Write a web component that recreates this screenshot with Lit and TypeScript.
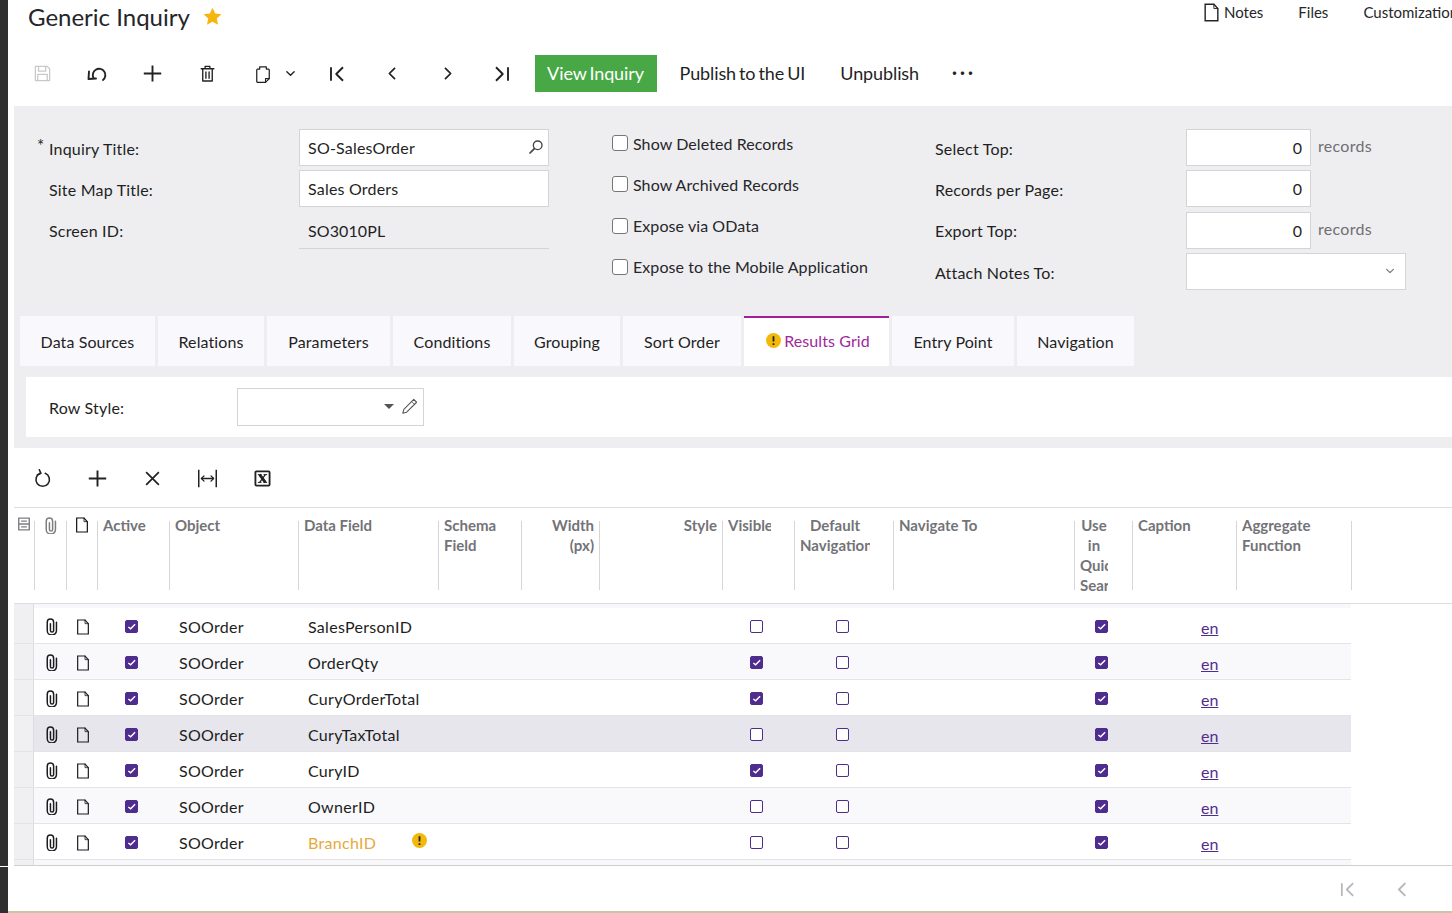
import { LitElement, html, css, svg } from "lit";
import { customElement } from "lit/decorators.js";

const icon = (body: unknown, size = 24, cls = "") =>
  html`<svg class="ic ${cls}" width=${size} height=${size} viewBox="0 0 24 24" fill="none" stroke="currentColor" stroke-width="1.6" stroke-linecap="round" stroke-linejoin="round">${body}</svg>`;

const I = {
  save: svg`<path d="M3 3h15l3 3v15H3z"/><path d="M7 3v6h9V3"/><path d="M6 21v-8h12v8"/>`,
  undo: svg`<path d="M8.500 16A6.300 6.300 0 1 1 18 18" stroke-width="1.900"/><path d="M4 9.500 3.500 17l7.500-.5" stroke-width="1.900"/>`,
  plus: svg`<path d="M12 2v20M1 12h22" stroke-width="2.4" stroke-linecap="butt"/>`,
  trash: svg`<path d="M4 6h16M9 6V3h6v3M6 6v15.500h12V6M10 10v8M14 10v8" stroke-width="1.700"/>`,
  clip: svg`<path d="M8 6V3.500h8V6h2.500l1 1v10.500L15 22H5l-.5-1V7l1-1z" stroke-width="1.500"/><path d="M15 22v-4.500h4.500" stroke-width="1.300"/>`,
  chev: svg`<path d="m4 8 8 8 8-8" stroke-width="3"/>`,
  first: svg`<path d="M4 3v18M20 3l-9 9 9 9" stroke-width="2.500" stroke-linecap="butt"/>`,
  prev: svg`<path d="m16 3-9 9 9 9" stroke-width="2.800" stroke-linecap="butt"/>`,
  next: svg`<path d="m8 3 9 9-9 9" stroke-width="2.800" stroke-linecap="butt"/>`,
  last: svg`<path d="M20 3v18M4 3l9 9-9 9" stroke-width="2.500" stroke-linecap="butt"/>`,
  note: svg`<path d="M4 1.500h11l5 5.500v15.500H4z" stroke-width="1.800" stroke-linejoin="miter"/><path d="M15 1.500V7h5" stroke-width="1.200"/>`,
  search: svg`<circle cx="14.500" cy="9.500" r="6.500" stroke-width="2"/><path d="M9.500 14.500 3 21" stroke-width="2.600"/>`,
  pencil: svg`<path d="M18 2l4 4L8 20l-5.500 1.500L4 16z" stroke-width="1.500"/><path d="M15 5l4 4" stroke-width="1.200"/>`,
  refresh: svg`<path d="M9 5.500A8.500 8.500 0 1 0 15.500 5.500" stroke-width="2"/><path d="M8 1l2 4.500-4.500 2" stroke-width="2"/>`,
  x: svg`<path d="m3 3 18 18M21 3 3 21" stroke-width="2.400" stroke-linecap="butt"/>`,
  fit: svg`<path d="M2 2v20M22 2v20M5 12h14" stroke-width="1.700" stroke-linecap="butt"/><path d="m8 9-3 3 3 3M16 9l3 3-3 3" stroke-width="1.500"/>`,
  excel: svg`<rect x="2" y="2" width="20" height="20" rx="1.500" stroke-width="2.600"/><path d="M8 6.500 16 17.500" stroke-width="4" stroke-linecap="butt"/><path d="M16 6.500 8 17.500" stroke-width="1.800" stroke-linecap="butt"/><path d="M5.500 6.500h5M13.500 6.500h5M5.500 17.500h5M13.500 17.500h5" stroke-width="1.400" stroke-linecap="butt"/>`,
  paper: svg`<path d="M10.500 8v9.500a2.250 2.250 0 0 0 4.500 0V6a4.500 4.500 0 0 0-9 0v11.500a6.500 6.500 0 0 0 13 0V6" stroke-width="2.100"/>`,
  store: svg`<rect x="3" y="2" width="18" height="20" stroke-width="2.400"/><path d="M3 12h18M8 7h8M8 17h8" stroke-width="2.400"/>`,
};

const star = html`<svg class="star" width="19" height="19" viewBox="0 0 24 24"><path fill="#f5b70f" d="m12 1 3.400 7.300 7.900.900-5.900 5.400 1.600 7.900L12 18.500l-7 4 1.600-7.900L.7 9.200l7.900-.900z"/></svg>`;

const warn = () =>
  html`<svg class="warn" width="15" height="15" viewBox="0 0 16 16"><circle cx="8" cy="8" r="8" fill="#f2b90c"/><path d="M8 3.500v5.500M8 11v1.800" stroke="#222" stroke-width="1.900"/></svg>`;

const check = (on: boolean) =>
  html`<span class="cb ${on ? "on" : ""}">${on
    ? html`<svg width="9" height="9" viewBox="0 0 10 10"><path d="m1.500 5.500 2.500 2 5-5" fill="none" stroke="#fff" stroke-width="1.600"/></svg>`
    : ""}</span>`;

const rows = [
  { f: "SalesPersonID", v: false },
  { f: "OrderQty", v: true },
  { f: "CuryOrderTotal", v: true },
  { f: "CuryTaxTotal", v: false, sel: true },
  { f: "CuryID", v: true },
  { f: "OwnerID", v: false },
  { f: "BranchID", v: false, warn: true },
];

const tabs: [string, number][] = [
  ["Data Sources", 135],
  ["Relations", 106],
  ["Parameters", 123],
  ["Conditions", 118],
  ["Grouping", 106],
  ["Sort Order", 118],
  ["Results Grid", 145],
  ["Entry Point", 122],
  ["Navigation", 117],
];

@customElement("app-root")
export class AppRoot extends LitElement {
  static styles = css`
    :host { display: flex; width: 1452px; height: 913px; overflow: hidden; background: #fff; color: #1f1f24; font-family: Lato, "Liberation Sans", sans-serif; font-size: 16px; }
    .ic { display: block; flex: none; }
    .side { width: 8px; flex: none; display: flex; flex-direction: column; gap: 1px; }
    .side div { background: #2f2f2f; }
    .side .a { height: 866px; }
    .side .b { flex: 1; }
    .main { flex: 1; min-width: 0; display: flex; flex-direction: column; }

    .head { height: 55px; display: flex; align-items: flex-start; flex: none; }
    .title { margin: 2px 0 0 20px; font-size: 24px; line-height: 30px; color: #25252a; }
    .star { margin: 7px 0 0 13px; }
    .links { margin: 3px 0 0 auto; width: 250px; overflow: hidden; display: flex; align-items: center; font-size: 15px; line-height: 17px; white-space: nowrap; color: #26262b; flex: none; }
    .links .ic { margin-right: 3px; }
    .links .files { margin-left: 35px; }
    .links .cust { margin-left: 35px; }

    .bar { height: 51px; flex: none; display: flex; align-items: flex-start; padding-left: 6.500px; }
    .slot { width: 55px; height: 37px; display: flex; align-items: center; justify-content: center; flex: none; color: #222; }
    .slot.off { color: #c9c9c9; }
    .slot.copy { width: 75px; justify-content: flex-start; padding-left: 18px; box-sizing: border-box; gap: 12px; }
    .btn { height: 35px; padding-bottom: 2px; display: flex; align-items: center; font-size: 18px; letter-spacing: -0.1px; word-spacing: -1.500px; white-space: nowrap; flex: none; }
    .btn.go { width: 122px; justify-content: center; margin-left: 5px; background: #47a845; color: #fff; }
    .btn.pub { margin-left: 23px; }
    .btn.unp { margin-left: 35px; }
    .dots { margin-left: 33px; font-size: 18px; letter-spacing: 3px; font-weight: 700; height: 37px; line-height: 35px; }

    .panel { margin-left: 6px; background: #eeeef0; padding: 23px 0 11px; flex: none; }
    .form { display: grid; grid-template-columns: 250px 250px 386px 251px 220px; grid-template-rows: repeat(4, 37px); row-gap: 4.333px; padding-left: 35px; margin-bottom: 26px; }
    .lab { display: flex; align-items: center; padding-top: 1.600px; font-size: 16px; letter-spacing: 0.2px; white-space: nowrap; }
    .ast { margin-left: -12px; margin-top: -5px; width: 12px; font-size: 17px; }
    .inp { box-sizing: border-box; background: #fff; border: 1px solid #d4d4d6; display: flex; align-items: center; justify-content: space-between; padding: 0 4px 0 8px; font-size: 16px; letter-spacing: 0.2px; }
    .inp .ic { color: #444; margin-top: -1px; }
    .ro { background: none; border: 0; border-bottom: 1px solid #d4d4d6; padding-left: 9px; padding-top: 1px; letter-spacing: 0.1px; }
    .chk { display: flex; align-items: center; gap: 5px; font-size: 16px; letter-spacing: 0.08px; padding: 0 0 9px 63px; white-space: nowrap; color: #26262b; }
    .box { width: 16px; height: 16px; box-sizing: border-box; border: 1px solid #767676; border-radius: 3px; background: #fff; flex: none; }
    .num { display: flex; align-items: center; }
    .num .n { width: 125px; height: 37px; box-sizing: border-box; background: #fff; border: 1px solid #d4d4d6; text-align: right; padding: 0 8px; line-height: 36px; font-size: 16px; flex: none; }
    .num .u { margin-left: 7px; color: #6f6f74; font-size: 16px; letter-spacing: 0.3px; margin-top: -4px; }
    .pick { width: 220px; height: 37px; box-sizing: border-box; background: #fff; border: 1px solid #d4d4d6; display: flex; align-items: center; justify-content: flex-end; padding-right: 10px; color: #777; }

    .tabs { display: flex; gap: 3px; margin-left: 6px; margin-bottom: 11px; height: 50px; }
    .tab { background: #f9f8fc; display: flex; align-items: center; justify-content: center; padding-top: 2px; font-size: 16px; letter-spacing: 0.1px; white-space: nowrap; box-sizing: border-box; }
    .tab.act { background: #fff; border-top: 2px solid #a0209a; color: #a0289c; gap: 3px; padding: 0 0 3px 3px; }
    .tab .warn { margin-top: 0; }
    .rowstyle { margin-left: 12px; height: 60px; background: #fff; display: flex; align-items: center; padding-left: 23px; font-size: 16px; letter-spacing: 0.2px; }
    .rowstyle .rl { width: 188px; padding-top: 2px; }
    .rs { width: 187px; height: 38px; box-sizing: border-box; border: 1px solid #d4d4d6; display: flex; align-items: center; justify-content: flex-end; padding-right: 5px; gap: 7px; color: #555; }
    .tri { width: 0; height: 0; border: 5px solid transparent; border-top: 5px solid #555; border-bottom: 0; }

    .gbar { height: 59px; margin-left: 6.500px; display: flex; align-items: center; flex: none; box-sizing: border-box; padding-top: 2px; }

    .cols { display: grid; grid-template-columns: 20px 32px 31px 72px 129px 140px 83px 78px 123px 72px 99px 181px 58px 104px 115px; }
    .ghead { margin-left: 6px; height: 97px; box-sizing: border-box; border-top: 1px solid #dedee2; border-bottom: 1px solid #dedee2; flex: none; color: #737378; font-size: 15px; font-weight: 700; line-height: 20px; }
    .h { position: relative; padding: 7px 6px 0; min-width: 0; box-sizing: border-box; }
    .h::after { content: ""; position: absolute; right: -1px; top: 13px; height: 69px; width: 1px; background: #d6d6d8; }
    .h.ic-h { padding: 9px 0 0; display: flex; justify-content: center; }
    .h .t { overflow: hidden; }
    .h.r { text-align: right; padding-right: 5px; }
    .h.ctr { text-align: center; }
    .p23 { padding-right: 23px; } .p24 { padding-right: 24px; }
    .gray { color: #7d7d82; } .blk { color: #111; }

    .gut { height: 4px; margin-left: 6px; width: 1337px; display: grid; grid-template-columns: 20px 1fr; background: #f8f8fb; flex: none; }
    .gcell { background: #f0f0f3; border-right: 1px solid #dcdce4; box-sizing: border-box; }
    .gr { margin-left: 6px; width: 1337px; height: 36px; box-sizing: border-box; border-bottom: 1px solid #e4e4e8; flex: none; background: #fff; }
    .gr.alt { background: #f9f9fc; }
    .gr.sel { background: #e6e6ec; }
    .c { display: flex; align-items: center; min-width: 0; white-space: nowrap; font-size: 16px; letter-spacing: 0.3px; color: #1d1d22; padding-top: 2.500px; }
    .c.f { padding-left: 10px; padding-right: 11px; justify-content: space-between; }
    .c.w { color: #e8a93a; }
    .warn { flex: none; margin-top: -5px; }
    .c.i { padding-top: 2px; color: #1c1c20; }
    .c.a { padding-left: 10px; }
    .c.pc { padding-left: 9px; }
    .c.n { padding-left: 9px; padding-top: 4px; }
    .c.k28 { padding-left: 28px; padding-top: 3px; } .c.k42 { padding-left: 42px; padding-top: 3px; } .c.k21 { padding-left: 21px; padding-top: 3px; }
    .c.en { padding-left: 69px; letter-spacing: 0; padding-top: 3.500px; }
    .cb { width: 13px; height: 13px; box-sizing: border-box; border: 1.500px solid #4f2d8f; border-radius: 2px; display: flex; align-items: center; justify-content: center; margin-top: -1px; background: #fff; }
    .cb.on { background: #4f2d8f; }
    .c a { color: #4f2d8f; text-decoration: underline; }
    .gfoot { margin-left: 6px; width: 1337px; height: 5px; background: #f8f8fb; flex: none; display: grid; grid-template-columns: 20px 1fr; }

    .pagerwrap { flex: 1; display: flex; border-bottom: 2px solid #cbc5a8; }
    .pager { margin-left: 6px; flex: 1; box-sizing: border-box; border-top: 1px solid #cfcfd2; display: flex; justify-content: flex-end; align-items: center; padding: 3px 41px 0 0; gap: 38px; color: #b5b9bd; }
  `;

  private header() {
    const hs = [
      html`<div class="h ic-h gray">${icon(I.store, 14)}</div>`,
      html`<div class="h ic-h gray">${icon(I.paper, 17)}</div>`,
      html`<div class="h ic-h blk">${icon(I.note, 16)}</div>`,
      html`<div class="h"><div class="t">Active</div></div>`,
      html`<div class="h"><div class="t">Object</div></div>`,
      html`<div class="h"><div class="t">Data Field</div></div>`,
      html`<div class="h"><div class="t">Schema Field</div></div>`,
      html`<div class="h r"><div class="t">Width<br />(px)</div></div>`,
      html`<div class="h r"><div class="t">Style</div></div>`,
      html`<div class="h p23"><div class="t">Visible</div></div>`,
      html`<div class="h ctr p23"><div class="t">Default Navigation</div></div>`,
      html`<div class="h"><div class="t">Navigate To</div></div>`,
      html`<div class="h ctr p24"><div class="t">Use in Quick Search</div></div>`,
      html`<div class="h"><div class="t">Caption</div></div>`,
      html`<div class="h"><div class="t">Aggregate Function</div></div>`,
    ];
    return html`<div class="ghead cols">${hs}</div>`;
  }

  private row(r: (typeof rows)[number], i: number) {
    return html`<div class="gr cols ${r.sel ? "sel" : i % 2 ? "alt" : ""}">
      <div class="gcell"></div>
      <div class="c i pc">${icon(I.paper, 17)}</div>
      <div class="c i n">${icon(I.note, 16)}</div>
      <div class="c k28">${check(true)}</div>
      <div class="c a">SOOrder</div>
      <div class="c f ${r.warn ? "w" : ""}"><span>${r.f}</span>${r.warn ? warn() : ""}</div>
      <div></div><div></div><div></div>
      <div class="c k28">${check(r.v)}</div>
      <div class="c k42">${check(false)}</div>
      <div></div>
      <div class="c k21">${check(true)}</div>
      <div class="c en"><a>en</a></div>
      <div></div>
    </div>`;
  }

  render() {
    const slot = (b: unknown, size = 20, off = false) => html`<div class="slot ${off ? "off" : ""}">${icon(b, size)}</div>`;
    return html`
      <div class="side"><div class="a"></div><div class="b"></div></div>
      <div class="main">
        <div class="head">
          <div class="title">Generic Inquiry</div>
          ${star}
          <div class="links">
            ${icon(I.note, 19)}<span>Notes</span><span class="files">Files</span><span class="cust">Customization</span>
          </div>
        </div>
        <div class="bar">
          ${slot(I.save, 19, true)}${slot(I.undo, 24)}${slot(I.plus, 19)}${slot(I.trash, 19)}
          <div class="slot copy">${icon(I.clip, 20)}${icon(I.chev, 11)}</div>
          ${slot(I.first, 18)}${slot(I.prev, 15)}${slot(I.next, 15)}${slot(I.last, 18)}
          <div class="btn go">View Inquiry</div>
          <div class="btn pub">Publish to the UI</div>
          <div class="btn unp">Unpublish</div>
          <div class="dots">···</div>
        </div>
        <div class="panel">
          <div class="form">
            <div class="lab"><span class="ast">*</span>Inquiry Title:</div>
            <div class="inp">SO-SalesOrder${icon(I.search, 16)}</div>
            <div class="chk"><span class="box"></span>Show Deleted Records</div>
            <div class="lab">Select Top:</div>
            <div class="num"><div class="n">0</div><div class="u">records</div></div>

            <div class="lab">Site Map Title:</div>
            <div class="inp">Sales Orders</div>
            <div class="chk"><span class="box"></span>Show Archived Records</div>
            <div class="lab">Records per Page:</div>
            <div class="num"><div class="n">0</div></div>

            <div class="lab">Screen ID:</div>
            <div class="inp ro">SO3010PL</div>
            <div class="chk"><span class="box"></span>Expose via OData</div>
            <div class="lab">Export Top:</div>
            <div class="num"><div class="n">0</div><div class="u">records</div></div>

            <div></div><div></div>
            <div class="chk"><span class="box"></span>Expose to the Mobile Application</div>
            <div class="lab">Attach Notes To:</div>
            <div class="pick">${icon(I.chev, 10)}</div>
          </div>
          <div class="tabs">
            ${tabs.map(([t, w]) =>
              t === "Results Grid"
                ? html`<div class="tab act" style="width:${w}px">${warn()}<span>${t}</span></div>`
                : html`<div class="tab" style="width:${w}px">${t}</div>`
            )}
          </div>
          <div class="rowstyle">
            <div class="rl">Row Style:</div>
            <div class="rs"><span class="tri"></span>${icon(I.pencil, 17)}</div>
          </div>
        </div>
        <div class="gbar">
          ${slot(I.refresh, 19)}${slot(I.plus, 19)}${slot(I.x, 17)}${slot(I.fit, 21)}${slot(I.excel, 17)}
        </div>
        ${this.header()}
        <div class="gut"><div class="gcell"></div><div></div></div>
        ${rows.map((r, i) => this.row(r, i))}
        <div class="gfoot"><div class="gcell"></div><div></div></div>
        <div class="pagerwrap"><div class="pager">${icon(I.first, 17)}${icon(I.prev, 17)}</div></div>
      </div>
    `;
  }
}
